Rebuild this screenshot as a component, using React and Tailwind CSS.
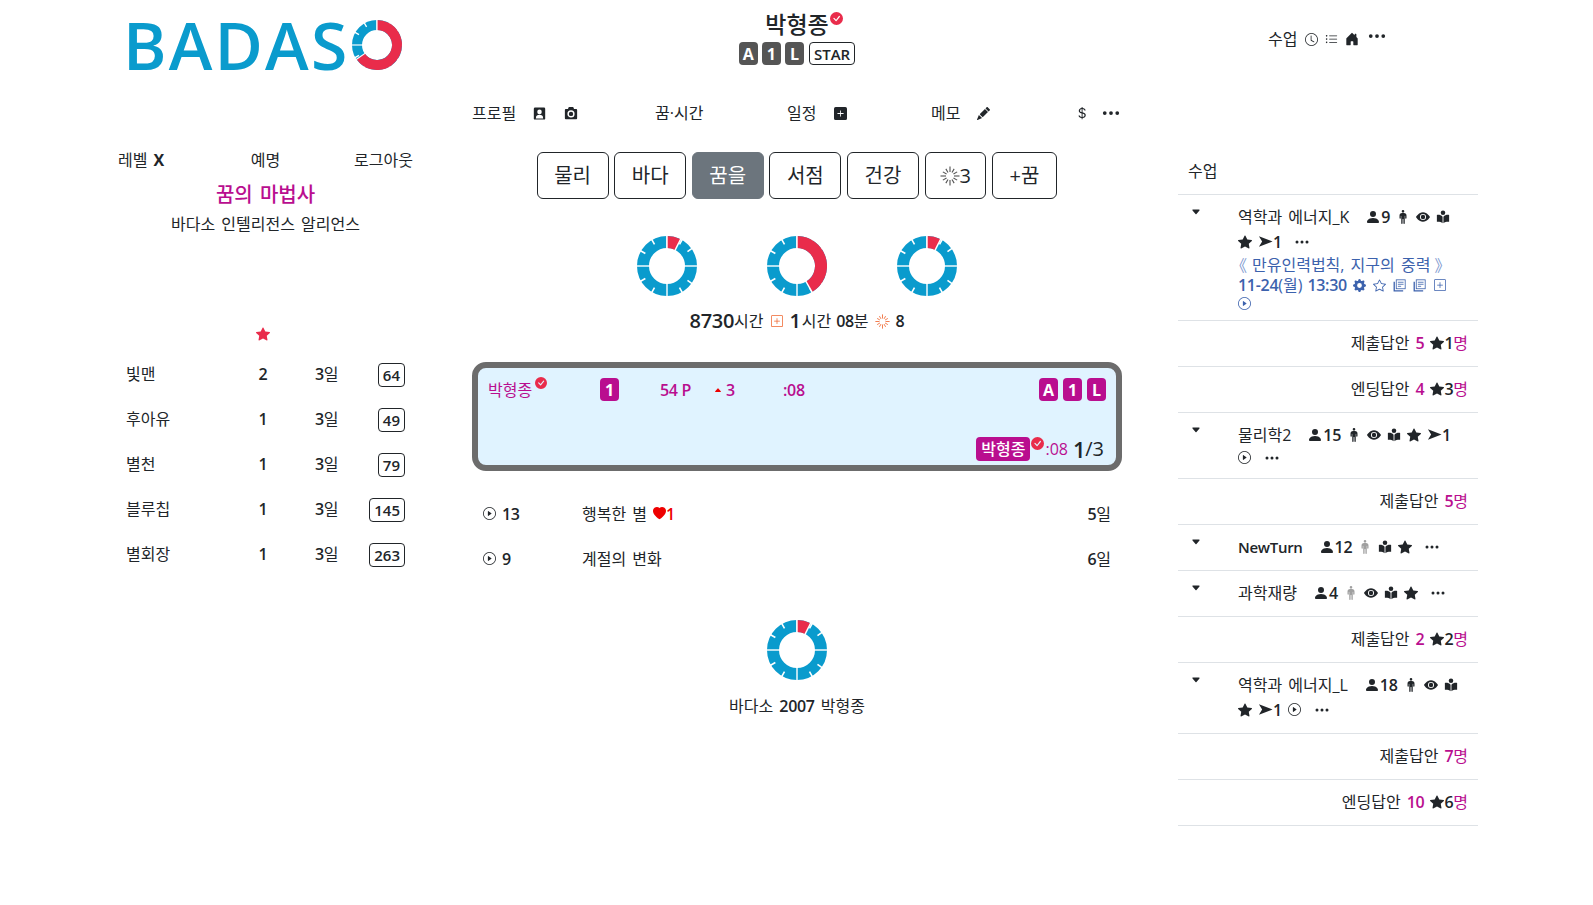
import {
  BsCheckCircleFill,
  BsPlusSquareFill,
  BsPlusSquare,
  BsPencilFill,
  BsCurrencyDollar,
  BsThreeDots,
  BsClock,
  BsListUl,
  BsHouseDoorFill,
  BsPersonFill,
  BsPersonStanding,
  BsEyeFill,
  BsStarFill,
  BsStar,
  BsPlayCircle,
  BsCaretDownFill,
  BsCaretUpFill,
  BsGearFill,
  BsHeartFill,
} from "react-icons/bs";

const BLUE = "#0a9bcd";
const RED = "#e92c4b";

function polar(r, deg) {
  const a = ((deg - 90) * Math.PI) / 180;
  return [r * Math.cos(a), r * Math.sin(a)];
}

function Donut({ red = 27, size = 60, className = "" }) {
  const ticks = [30, 55, 125, 150, 210, 240, 300, 330];
  const quarters = [0, 90, 180, 270];
  const [ex, ey] = polar(24, red);
  const [bx1, by1] = polar(17, red);
  const [bx2, by2] = polar(31, red);
  return (
    <svg width={size} height={size} viewBox="-30 -30 60 60" className={className}>
      <circle r="24" fill="none" stroke={BLUE} strokeWidth="12" />
      {ticks.map((d) => {
        const [x1, y1] = polar(25, d);
        const [x2, y2] = polar(31, d);
        return <line key={d} x1={x1} y1={y1} x2={x2} y2={y2} stroke="#fff" strokeWidth="1.6" />;
      })}
      {quarters.map((d) => {
        const [x1, y1] = polar(17, d);
        const [x2, y2] = polar(31, d);
        return <line key={d} x1={x1} y1={y1} x2={x2} y2={y2} stroke="#fff" strokeWidth="1.4" />;
      })}
      <path
        d={`M 0 -24 A 24 24 0 ${red > 180 ? 1 : 0} 1 ${ex} ${ey}`}
        fill="none"
        stroke={RED}
        strokeWidth="12"
      />
      <line x1={bx1} y1={by1} x2={bx2} y2={by2} stroke="#fff" strokeWidth="1.4" />
      <line x1="0" y1="-17" x2="0" y2="-31" stroke="#fff" strokeWidth="1.4" />
    </svg>
  );
}

function Spark({ size = 16, color = "#212529" }) {
  const spokes = [0, 30, 60, 90, 120, 150, 180, 210, 240, 270, 300, 330];
  return (
    <svg width={size} height={size} viewBox="-8 -8 16 16" className="inline-block shrink-0">
      {spokes.map((d) => {
        const [x1, y1] = polar(3.2, d);
        const [x2, y2] = polar(d % 90 === 0 ? 7.6 : 6.6, d);
        return <line key={d} x1={x1} y1={y1} x2={x2} y2={y2} stroke={color} strokeWidth="0.9" />;
      })}
    </svg>
  );
}

function BookReader({ size = 14 }) {
  return (
    <svg width={size} height={size} viewBox="0 0 16 16" fill="#212529" className="shrink-0">
      <circle cx="8" cy="3.2" r="2.6" />
      <path d="M1 5.6C3.4 5.2 6 5.8 7.5 7.6V15C6 13.6 3.4 13.2 1 13.4ZM15 5.6C12.6 5.2 10 5.8 8.5 7.6V15C10 13.6 12.6 13.2 15 13.4Z" />
    </svg>
  );
}

function Arrow({ size = 15 }) {
  return (
    <svg width={size} height={size} viewBox="0 0 16 16" fill="#212529" className="shrink-0">
      <path d="M1 2.4L15.5 8L1 13.6L4.4 8Z" />
    </svg>
  );
}

function PersonCard() {
  return (
    <svg width="13" height="13" viewBox="0 0 16 16" className="ml-[17px] shrink-0">
      <rect x="1" y="0.5" width="14" height="15" rx="1.5" fill="#212529" />
      <circle cx="8" cy="6" r="2.8" fill="#fff" />
      <path d="M3.5 14C3.5 10.6 5.5 9.6 8 9.6S12.5 10.6 12.5 14Z" fill="#fff" />
    </svg>
  );
}

function Camera() {
  return (
    <svg width="14" height="14" viewBox="0 0 16 16" className="ml-[18px] shrink-0">
      <path d="M5.5 1H10.5L11.5 3.5H14A1 1 0 0 1 15 4.5V14A1 1 0 0 1 14 15H2A1 1 0 0 1 1 14V4.5A1 1 0 0 1 2 3.5H4.5Z" fill="#212529" />
      <circle cx="8" cy="9" r="3.3" fill="none" stroke="#fff" strokeWidth="1.6" />
    </svg>
  );
}

function StackedPage() {
  return (
    <svg width="13" height="13" viewBox="0 0 16 16" fill="none" stroke="currentColor" className="ml-[7px] shrink-0">
      <rect x="4" y="1" width="11" height="11" />
      <path d="M6 4H13M6 6.5H13M6 9H10" />
      <path d="M1.5 3.5V14.5H12.5" strokeWidth="1.6" />
    </svg>
  );
}

function PlayCircle({ className = "" }) {
  return <BsPlayCircle className={`size-[13px] ${className}`} />;
}

function Num({ children, className = "" }) {
  return <span className={`font-semibold tracking-[-0.3px] [word-spacing:0] ${className}`}>{children}</span>;
}

function Level({ children, className = "bg-[#555555]" }) {
  return (
    <span className={`flex h-[23px] min-w-[19px] items-center justify-center rounded-[4px] px-[4px] text-[16px] leading-none font-bold text-white ${className}`}>
      {children}
    </span>
  );
}

const friends = [
  { name: "빛맨", count: 2, days: 3, score: 64 },
  { name: "후아유", count: 1, days: 3, score: 49 },
  { name: "별천", count: 1, days: 3, score: 79 },
  { name: "블루칩", count: 1, days: 3, score: 145 },
  { name: "별회장", count: 1, days: 3, score: 263 },
];

const tabs = ["물리", "바다", "꿈을", "서점", "건강"];

function Answer({ label, value, stars }) {
  return (
    <div className="flex h-[46px] items-center justify-end border-b border-[#dee2e6] pr-[10px] pb-[2px]">
      <span>{label}</span>
      <Num className="ml-[6px] text-[#b90e8f]">{value}</Num>
      {stars !== undefined && (
        <>
          <BsStarFill className="ml-[6px] size-[14px]" />
          <Num>{stars}</Num>
        </>
      )}
      <span className="text-[#b90e8f]">명</span>
    </div>
  );
}

function Course({ height, children }) {
  return (
    <div className="flex items-start border-b border-[#dee2e6]" style={{ height }}>
      <div className="flex w-[60px] shrink-0 justify-center pt-[12px] pr-[31px] pl-[6px]">
        <BsCaretDownFill className="size-[10px]" />
      </div>
      <div className="min-w-0 flex-1 pt-[9px]">{children}</div>
    </div>
  );
}

export default function App() {
  return (
    <div className="flex min-h-[905px] bg-white pl-[118px] font-['Open_Sans','Noto_Sans_CJK_KR',sans-serif] text-[16px] leading-[24px] text-[#212529] [word-spacing:2px]">
      {/* left */}
      <div className="w-[295px] shrink-0">
        <div className="flex h-[88px] items-start pt-[5px] pl-[5px]">
          <span className="text-[66px] leading-[78px] font-semibold tracking-[2.2px] text-[#0a9bcd]">BADAS</span>
          <Donut red={235} size={50} className="mt-[15px] ml-[3px]" />
        </div>
        <div className="mt-[60px] grid grid-cols-3">
          <span>
            레벨 <b>X</b>
          </span>
          <span className="text-center">예명</span>
          <span className="text-right">로그아웃</span>
        </div>
        <div className="mt-[11px] text-center text-[20px] leading-[24px] font-medium text-[#b90e8f]">꿈의 마법사</div>
        <div className="mt-[5px] text-center">바다소 인텔리전스 알리언스</div>
        <div className="mt-[91px] flex justify-center pr-[5px]">
          <BsStarFill className="size-[14px] text-[#e92c4b]" />
        </div>
        <div className="mt-[10px] pr-[8px] pl-[8px]">
          {friends.map((f) => (
            <div key={f.name} className="grid h-[45px] grid-cols-[117px_40px_32px_1fr] items-center">
              <span>{f.name}</span>
              <Num className="text-center">{f.count}</Num>
              <span />
              <div className="flex items-center justify-between">
                <span>
                  <Num>{f.days}</Num>일
                </span>
                <span className="relative top-[1px] rounded-[4px] border border-[#212529] px-[4px] text-[15px] leading-[22px] font-semibold">{f.score}</span>
              </div>
            </div>
          ))}
        </div>
      </div>

      {/* center */}
      <div className="ml-[59px] w-[650px] shrink-0">
        <div className="flex flex-col items-center pt-[10px]">
          <div className="relative text-[23px] leading-[28px] font-medium">
            박형종
            <BsCheckCircleFill className="absolute top-[2px] -right-[14px] size-[13px] text-[#e92c4b]" />
          </div>
          <div className="mt-[4px] flex gap-[4px]">
            <Level>A</Level>
            <Level>1</Level>
            <Level>L</Level>
            <span className="ml-[1px] flex h-[23px] items-center rounded-[4px] border border-[#212529] px-[4px] text-[15px] font-semibold">STAR</span>
          </div>
        </div>
        <div className="mt-[36px] flex h-[24px] items-center">
          <div className="flex w-[183px] items-center">
            프로필
            <PersonCard />
            <Camera />
          </div>
          <div className="w-[132px]">꿈·시간</div>
          <div className="flex w-[144px] items-center">
            일정
            <BsPlusSquareFill className="ml-[18px] size-[13px]" />
          </div>
          <div className="flex w-[144px] items-center">
            메모
            <BsPencilFill className="ml-[17px] size-[13px]" />
          </div>
          <div className="flex items-center">
            <BsCurrencyDollar className="size-[14px]" />
            <BsThreeDots className="ml-[12px] size-[20px]" />
          </div>
        </div>
        <div className="mt-[27px] flex justify-center gap-[5.6px]">
          {tabs.map((t) => (
            <button
              key={t}
              className={
                t === "꿈을"
                  ? "h-[47px] w-[72px] rounded-[6px] border border-[#6c757d] bg-[#6c757d] text-[20px] text-white"
                  : "h-[47px] w-[72px] rounded-[6px] border border-[#212529] text-[20px]"
              }
            >
              {t}
            </button>
          ))}
          <button className="flex h-[47px] items-center rounded-[6px] border border-[#212529] px-[14px] text-[20px]">
            <Spark size={20} color="#555" />3
          </button>
          <button className="h-[47px] rounded-[6px] border border-[#212529] px-[17px] text-[20px]">+꿈</button>
        </div>
        <div className="mt-[37px] flex justify-center gap-[70px]">
          <Donut red={27} />
          <Donut red={150} />
          <Donut red={27} />
        </div>
        <div className="mt-[13px] flex h-[24px] items-center justify-center">
          <Num className="text-[20px]">8730</Num>시간
          <BsPlusSquare className="mx-[7px] size-[12px] text-[#f0662f]" />
          <Num className="mr-[1px] text-[20px]">1</Num>시간
          <Num className="ml-[5px]">08</Num>분
          <span className="mx-[6px] flex"><Spark size={15} color="#f0662f" /></span>
          <Num>8</Num>
        </div>

        <div className="mt-[29px] h-[109px] rounded-[14px] border-[6px] border-[#6c6c6c] bg-[#e0f3ff] px-[10px] pt-[10px]">
          <div className="flex h-[23px] items-center text-[#b90e8f]">
            <div className="relative w-[112px]">
              박형종
              <BsCheckCircleFill className="absolute -top-[1px] left-[47px] size-[12px] text-[#e92c4b]" />
            </div>
            <Level className="bg-[#b90e8f]">1</Level>
            <Num className="ml-[41px] w-[54px]">54 P</Num>
            <BsCaretUpFill className="size-[8px] text-[#ee0000]" />
            <Num className="ml-[4px] w-[57px]">3</Num>
            <Num>:08</Num>
            <div className="ml-auto flex gap-[5px]">
              <Level className="bg-[#b90e8f]">A</Level>
              <Level className="bg-[#b90e8f]">1</Level>
              <Level className="bg-[#b90e8f]">L</Level>
            </div>
          </div>
          <div className="mt-[36px] flex h-[24px] items-center justify-end pr-[2px]">
            <span className="rounded-[4px] bg-[#b90e8f] px-[5px] leading-[24px] font-medium text-white">박형종</span>
            <BsCheckCircleFill className="relative -top-[6px] mx-[1px] size-[13px] text-[#e92c4b]" />
            <span className="text-[#b90e8f]">:08</span>
            <Num className="ml-[5px] text-[22px]">1</Num>
            <span className="text-[20px]">/3</span>
          </div>
        </div>

        <div className="mt-[20px] px-[11px]">
          <div className="flex h-[45px] items-center">
            <PlayCircle />
            <Num className="ml-[6px] w-[80px]">13</Num>
            <span>행복한 별</span>
            <BsHeartFill className="ml-[6px] size-[13px] text-[#ee0000]" />
            <Num className="text-[#ee0000]">1</Num>
            <span className="ml-auto">
              <Num>5</Num>일
            </span>
          </div>
          <div className="flex h-[45px] items-center">
            <PlayCircle />
            <Num className="ml-[6px] w-[80px]">9</Num>
            <span>계절의 변화</span>
            <span className="ml-auto">
              <Num>6</Num>일
            </span>
          </div>
        </div>

        <div className="mt-[39px] flex justify-center">
          <Donut red={27} />
        </div>
        <div className="mt-[14px] text-center">
          바다소 <Num>2007</Num> 박형종
        </div>
      </div>

      {/* right */}
      <div className="ml-[56px] w-[300px] shrink-0">
        <div className="flex items-center pt-[27px] pl-[90px]">
          수업
          <BsClock className="ml-[8px] size-[13px]" />
          <BsListUl className="ml-[7px] size-[13px]" />
          <BsHouseDoorFill className="ml-[7px] size-[14px]" />
          <BsThreeDots className="relative -top-[3px] ml-[8px] size-[20px]" />
        </div>
        <div className="mt-[108px] h-[36px] border-b border-[#dee2e6] pl-[10px] leading-[24px]">수업</div>

        <Course height={126}>
          <div className="flex h-[25px] items-center">
            역학과 에너지_K
            <BsPersonFill className="ml-[16px] size-[16px]" />
            <Num>9</Num>
            <BsPersonStanding className="ml-[6px] size-[14px]" />
            <BsEyeFill className="ml-[6px] size-[14px]" />
            <span className="ml-[6px] flex"><BookReader /></span>
          </div>
          <div className="flex h-[25px] items-center">
            <BsStarFill className="size-[14px]" />
            <span className="ml-[6px] flex"><Arrow /></span>
            <Num>1</Num>
            <BsThreeDots className="ml-[12px] size-[16px]" />
          </div>
          <div className="flex h-[21px] items-center text-[#3c62ad]">
            <span className="mr-[5px] -ml-[7px] w-[16px] text-[#7f9ad0]">《</span>
            <span>만유인력법칙, 지구의 중력</span>
            <span className="ml-[4px] text-[#7f9ad0]">》</span>
          </div>
          <div className="flex h-[20px] items-center text-[#3c62ad]">
            <Num>11-24</Num>(월)<Num className="ml-[5px]">13:30</Num>
            <BsGearFill className="ml-[6px] size-[13px]" />
            <BsStar className="ml-[7px] size-[13px]" />
            <StackedPage />
            <StackedPage />
            <BsPlusSquare className="ml-[8px] size-[12px]" />
          </div>
          <div className="flex h-[16px] items-center text-[#3c62ad]">
            <PlayCircle />
          </div>
        </Course>
        <Answer label="제출답안" value={5} stars={1} />
        <Answer label="엔딩답안" value={4} stars={3} />

        <Course height={66}>
          <div className="flex h-[25px] items-center">
            물리학2
            <BsPersonFill className="ml-[16px] size-[16px]" />
            <Num>15</Num>
            <BsPersonStanding className="ml-[6px] size-[14px]" />
            <BsEyeFill className="ml-[6px] size-[14px]" />
            <span className="ml-[6px] flex"><BookReader /></span>
            <BsStarFill className="ml-[6px] size-[14px]" />
            <span className="ml-[6px] flex"><Arrow /></span>
            <Num>1</Num>
          </div>
          <div className="flex h-[21px] items-center">
            <PlayCircle />
            <BsThreeDots className="ml-[13px] size-[16px]" />
          </div>
        </Course>
        <Answer label="제출답안" value={5} />

        <Course height={46}>
          <div className="flex h-[25px] items-center">
            <span className="text-[15px] font-semibold tracking-[-0.3px]">NewTurn</span>
            <BsPersonFill className="ml-[16px] size-[16px]" />
            <Num>12</Num>
            <BsPersonStanding className="ml-[6px] size-[14px] text-[#a0a0a0]" />
            <span className="ml-[6px] flex"><BookReader /></span>
            <BsStarFill className="ml-[6px] size-[14px]" />
            <BsThreeDots className="ml-[12px] size-[16px]" />
          </div>
        </Course>
        <Course height={46}>
          <div className="flex h-[25px] items-center">
            과학재량
            <BsPersonFill className="ml-[16px] size-[16px]" />
            <Num>4</Num>
            <BsPersonStanding className="ml-[6px] size-[14px] text-[#a0a0a0]" />
            <BsEyeFill className="ml-[6px] size-[14px]" />
            <span className="ml-[6px] flex"><BookReader /></span>
            <BsStarFill className="ml-[6px] size-[14px]" />
            <BsThreeDots className="ml-[12px] size-[16px]" />
          </div>
        </Course>
        <Answer label="제출답안" value={2} stars={2} />

        <Course height={71}>
          <div className="flex h-[25px] items-center">
            역학과 에너지_L
            <BsPersonFill className="ml-[16px] size-[16px]" />
            <Num>18</Num>
            <BsPersonStanding className="ml-[6px] size-[14px]" />
            <BsEyeFill className="ml-[6px] size-[14px]" />
            <span className="ml-[6px] flex"><BookReader /></span>
          </div>
          <div className="flex h-[25px] items-center">
            <BsStarFill className="size-[14px]" />
            <span className="ml-[6px] flex"><Arrow /></span>
            <Num>1</Num>
            <PlayCircle className="ml-[6px]" />
            <BsThreeDots className="ml-[13px] size-[16px]" />
          </div>
        </Course>
        <Answer label="제출답안" value={7} />
        <Answer label="엔딩답안" value={10} stars={6} />
      </div>
    </div>
  );
}
